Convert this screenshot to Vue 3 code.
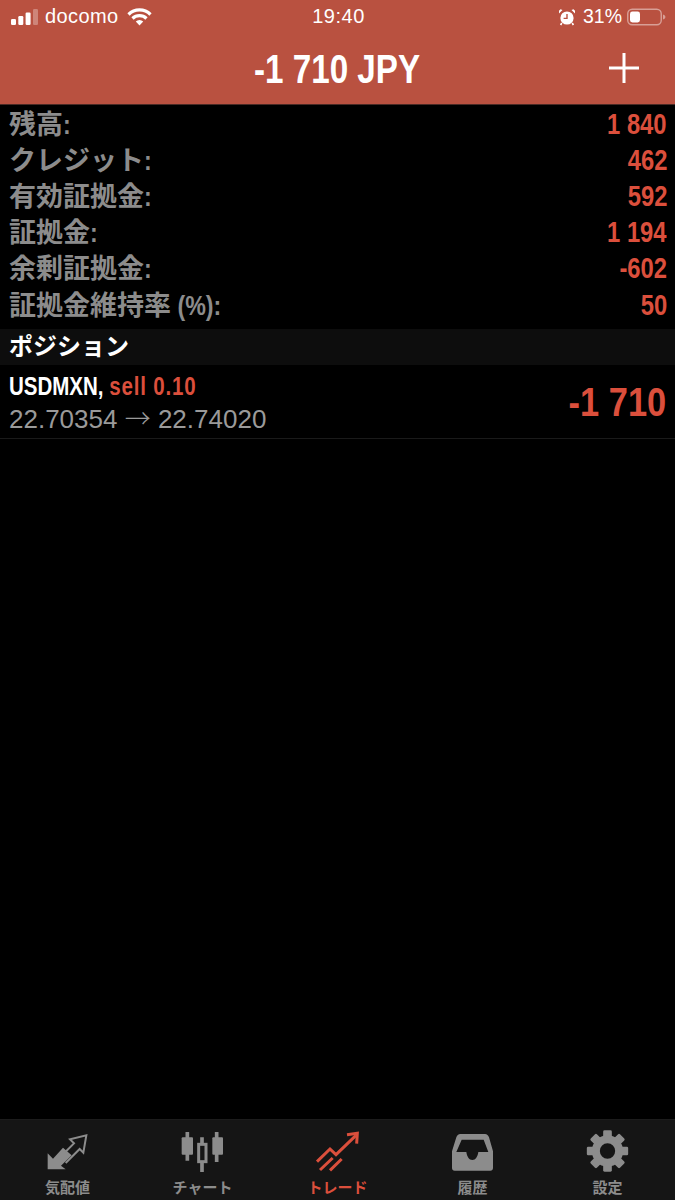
<script setup>
const rows = [
  ['残高', ':', '1 840'],
  ['クレジット', ':', '462'],
  ['有効証拠金', ':', '592'],
  ['証拠金', ':', '1 194'],
  ['余剰証拠金', ':', '-602'],
  ['証拠金維持率', ' (%):', '50'],
]
const teeth = [0, 45, 90, 135, 180, 225, 270, 315]
</script>

<template>
  <div class="app">
    <header class="head">
      <div class="status">
        <div class="status-left">
          <svg class="signal" width="27" height="16" viewBox="0 0 27 16">
            <rect x="0" y="10" width="5" height="6" rx="1.2" fill="#fff" />
            <rect x="7.300" y="7" width="5" height="9" rx="1.2" fill="#fff" />
            <rect x="14.600" y="3.500" width="5" height="12.500" rx="1.2" fill="#fff" />
            <rect x="22" y="0" width="5" height="16" rx="1.2" fill="#fff" opacity=".3" />
          </svg>
          <span class="carrier">docomo</span>
          <svg class="wifi" width="25" height="18" viewBox="0 0 25 18">
            <path d="M1.500 6.500a15.500 15.500 0 0 1 22 0" fill="none" stroke="#fff" stroke-width="3.200" />
            <path d="M5.500 10.500a10 10 0 0 1 14 0" fill="none" stroke="#fff" stroke-width="3.200" />
            <path d="M8.800 13.600a5 5 0 0 1 7.400 0L12.500 17.500z" fill="#fff" />
          </svg>
        </div>
        <span class="clock">19:40</span>
        <div class="status-right">
          <svg width="18" height="18" viewBox="0 0 18 18">
            <circle cx="9" cy="10" r="6.600" fill="#fff" />
            <path d="M1 5.500 4.500 2 2.500 1.200 1 2.800zM17 5.500 13.500 2l2-.8L17 2.800z" fill="#fff" />
            <path d="M3.800 15 2.600 17M14.200 15l1.200 2" stroke="#fff" stroke-width="1.600" />
            <path d="M9 6v4.400H5.600" fill="none" stroke="#b95140" stroke-width="1.400" />
          </svg>
          <span class="percent">31%</span>
          <svg width="39" height="18" viewBox="0 0 39 18">
            <rect x=".75" y="1.200" width="33.500" height="15.600" rx="4.500" fill="none" stroke="#fff" stroke-opacity=".45" stroke-width="1.400" />
            <rect x="3" y="3.500" width="10" height="11" rx="2.400" fill="#fff" />
            <path d="M36 6.500c1.600.5 2.400 1.400 2.400 2.500s-.8 2-2.400 2.500z" fill="#fff" opacity=".45" />
          </svg>
        </div>
      </div>
      <div class="titlebar">
        <h1 class="title">-1 710 JPY</h1>
        <svg class="plus" width="30" height="30" viewBox="0 0 30 30">
          <path d="M15 0v30M0 15h30" stroke="#fff" stroke-width="3" />
        </svg>
      </div>
    </header>

    <section class="summary">
      <div v-for="row in rows" :key="row[0]" class="row">
        <span class="label">{{ row[0] }}<span class="latin">{{ row[1] }}</span></span>
        <span class="value">{{ row[2] }}</span>
      </div>
    </section>

    <div class="section-title">ポジション</div>

    <div class="position">
      <div>
        <div class="pos-name">USDMXN, <span class="red">sell 0.10</span></div>
        <div class="pos-price">22.70354 <span class="arrow">→</span> 22.74020</div>
      </div>
      <div class="pos-profit">-1 710</div>
    </div>

    <div class="spacer"></div>

    <nav class="tabs">
      <div class="tab">
        <svg width="45" height="42" viewBox="135 56 135 126">
          <path d="M143 174V126l16 16 30-33 26 23-32 31 14 11z" fill="#8c8c8c" />
          <path d="M197 155l42-42 11 11 9-52-49 12 12 12-26 26" fill="none" stroke="#8c8c8c" stroke-width="6" />
        </svg>
        <span>気配値</span>
      </div>
      <div class="tab">
        <svg width="45" height="42" viewBox="543 56 135 126">
          <path d="M565 62v86M609 78v104M653 62v90" stroke="#8c8c8c" stroke-width="11" />
          <rect x="548" y="78" width="34" height="52" rx="3" fill="#8c8c8c" />
          <rect x="599" y="99" width="22" height="52" fill="#151515" stroke="#8c8c8c" stroke-width="9" />
          <rect x="640" y="78" width="32" height="52" rx="3" fill="#8c8c8c" />
        </svg>
        <span>チャート</span>
      </div>
      <div class="tab active">
        <svg width="45" height="42" viewBox="195 56 135 126">
          <path d="M201 151l39-38 18 17 60-58" fill="none" stroke="#db4f3c" stroke-width="9" />
          <path d="M291 70l31-4-2 31" fill="none" stroke="#db4f3c" stroke-width="9" />
          <path d="M210 176l38-36M240 177l35-34" fill="none" stroke="#db4f3c" stroke-width="9" />
        </svg>
        <span>トレード</span>
      </div>
      <div class="tab">
        <svg width="45" height="42" viewBox="599 56 135 126">
          <path fill-rule="evenodd" fill="#8c8c8c" d="M630 68h74c6 0 10 4 12 10l12 42v50c0 5-3 8-8 8H613c-5 0-8-3-8-8v-50l13-42c2-6 6-10 12-10zM634 85l-16 37h30c2 14 8 24 18 24s16-10 18-24h30l-14-37z" />
        </svg>
        <span>履歴</span>
      </div>
      <div class="tab">
        <svg width="45" height="42" viewBox="-67.500 -63 135 126">
          <circle r="35" fill="none" stroke="#8c8c8c" stroke-width="24" />
          <rect v-for="t in teeth" :key="t" x="-13" y="-62" width="26" height="22" rx="4" fill="#8c8c8c" :transform="`rotate(${t})`" />
        </svg>
        <span>設定</span>
      </div>
    </nav>
  </div>
</template>

<style>
html, body { margin: 0; background: #000; }
</style>

<style scoped>
.app {
  width: 675px;
  height: 1200px;
  display: flex;
  flex-direction: column;
  background: #000;
  overflow: hidden;
  font-family: "Liberation Sans", "Noto Sans CJK JP", sans-serif;
  color: #8c8c8c;
}
.head {
  height: 104px;
  background: #b95140;
  border-bottom: 1px solid #4a2a25;
  color: #fff;
}
.status {
  height: 36px;
  box-sizing: border-box;
  padding: 0 9px 3px 11px;
  display: grid;
  grid-template-columns: 1fr auto 1fr;
  align-items: center;
}
.status-left { display: flex; align-items: center; gap: 7px; }
.carrier { font-size: 20px; letter-spacing: .4px; }
.wifi { margin-left: 1px; }
.clock { font-size: 20px; letter-spacing: .5px; }
.status-right { display: flex; align-items: center; justify-content: flex-end; gap: 7px; }
.percent { font-size: 19.500px; margin-right: -2px; }
.titlebar {
  height: 66px;
  position: relative;
  display: flex;
  align-items: center;
  justify-content: center;
}
.title {
  margin: 0;
  font-size: 40px;
  font-weight: 700;
  transform: scaleX(.83);
}
.plus { position: absolute; right: 36px; top: 17px; }
.summary {
  display: grid;
  grid-auto-rows: 36.2px;
  padding: 0 8px 7px 9px;
}
.row { display: flex; align-items: center; justify-content: space-between; }
.label {
  font-size: 27px;
  font-weight: 700;
  line-height: 32px;
  padding-top: 3px;
}
.latin {
  display: inline-block;
  font-size: 28px;
  white-space: pre;
  transform: scaleX(.83);
  transform-origin: left;
}
.value {
  font-size: 29px;
  font-weight: 700;
  padding-top: 2px;
  color: #db4f3c;
  transform: scaleX(.82);
  transform-origin: right;
}
.section-title {
  height: 36px;
  line-height: 36px;
  padding-left: 9px;
  background: #0d0d0d;
  color: #fff;
  font-size: 24px;
  font-weight: 700;
}
.position {
  height: 74px;
  box-sizing: border-box;
  padding: 2px 9px 0;
  display: flex;
  align-items: center;
  justify-content: space-between;
  border-bottom: 1px solid #1a1a1a;
}
.pos-name {
  font-size: 25px;
  font-weight: 700;
  color: #fff;
  line-height: 30px;
  width: 250px;
  white-space: nowrap;
  transform: scaleX(.82);
  transform-origin: left;
}
.red { color: #db4f3c; letter-spacing: 1px; }
.pos-price { font-size: 26px; line-height: 32px; color: #9a9a9a; white-space: nowrap; }
.arrow { font-family: "Noto Sans CJK JP", sans-serif; font-weight: 300; }
.pos-profit {
  font-size: 41px;
  font-weight: 700;
  color: #db4f3c;
  transform: scaleX(.84);
  transform-origin: right;
}
.spacer { flex: 1; }
.tabs {
  height: 81px;
  box-sizing: border-box;
  background: #151515;
  border-top: 1px solid #1c1c1c;
  display: grid;
  grid-template-columns: repeat(5, 1fr);
}
.tab {
  display: flex;
  flex-direction: column;
  align-items: center;
  padding-top: 10px;
  font-size: 15px;
  font-weight: 700;
  line-height: 20px;
  gap: 6px;
}
.active { color: #db4f3c; }
</style>
